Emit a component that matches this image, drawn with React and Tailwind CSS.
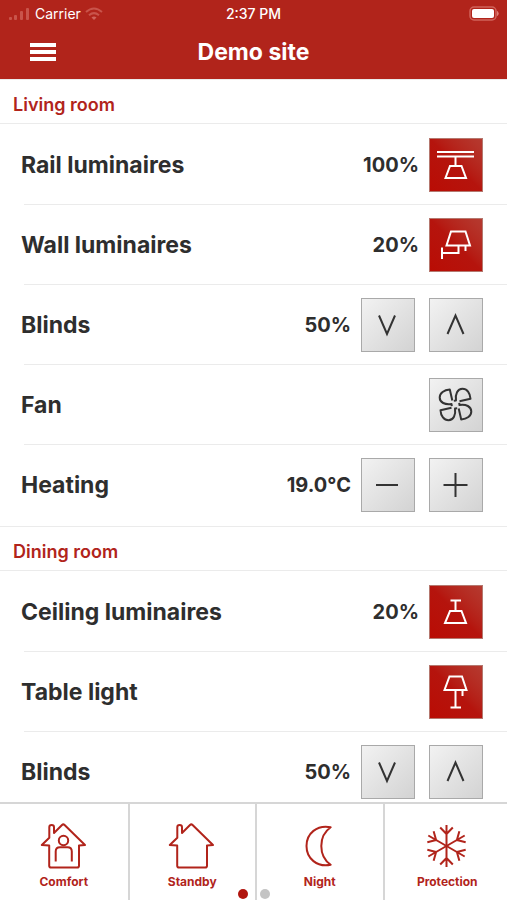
import React, { useState } from 'react';

const RailIcon = () => (
    <>
        <path d="M8 14H45M8 18.5H45M26.5 18.5V28" />
        <path d="M21 28H32.5L37 40H16.5Z" />
    </>
);

const WallIcon = () => (
    <>
        <path d="M22 13.5H36.5L41 27.5H17.5Z" />
        <path d="M29.5 27.5V35H13M13 29.5V41M36.5 27.5V33" />
    </>
);

const CeilingIcon = () => (
    <>
        <path d="M21.5 15.5H32M26.5 15.5V26" />
        <path d="M21 26H32.5L37 38H16Z" />
    </>
);

const TableIcon = () => (
    <>
        <path d="M20.5 11.5H33L37.5 25H15.5Z" />
        <path d="M26.5 25V42.5M21.5 42.5H32M33.5 25V31" />
    </>
);

const fanBlade = 'M24.8 22.8L27 22.5C26 16 28.5 10.7 33.5 10.7C38 10.7 41.2 15 41.5 20.8L30.5 23.3';

const FanIcon = () => (
    <g strokeLinejoin="round">
        <path d={fanBlade} />
        <path d={fanBlade} transform="rotate(90 26.5 26.5)" />
        <path d={fanBlade} transform="rotate(180 26.5 26.5)" />
        <path d={fanBlade} transform="rotate(270 26.5 26.5)" />
    </g>
);

const DownIcon = () => <path d="M18 17.5L26 36L34 17.5" />;
const UpIcon = () => <path d="M18.5 36L26.5 17.5L34.5 36" />;
const MinusIcon = () => <path d="M15 27H37" />;
const PlusIcon = () => <path d="M14.5 27H38.5M26.5 15V39" />;

const HousePath = () => (
    <path d="M9.3 15.7V5.2Q9.3 3 11.6 3Q14 3 14 5.2V11L22 3Q23.3 1.8 24.6 3L45 23L39 23.6V43.7Q39 45.5 37.2 45.5H11Q9.2 45.5 9.2 43.7V23.6L1.8 23Z" />
);

const ComfortIcon = () => (
    <>
        <HousePath />
        <circle cx="23.5" cy="18.5" r="4.7" />
        <path d="M15.7 39.5V29.5Q15.7 25.2 20 25.2H27.5Q31.8 25.2 31.8 29.5V39.5" />
    </>
);

const NightIcon = () => (
    <path d="M34.7 5.2C21 2.5 10.5 11.5 10.5 24C10.5 36.5 21 45.5 34.7 42.8C28.5 38.5 25.3 32 25.3 24C25.3 16 28.5 9.5 34.7 5.2Z" />
);

const ProtectionIcon = () => (
    <>
        {[0, 60, 120, 180, 240, 300].map((angle) => (
            <path key={angle} d="M23.5 24V3M17.2 5.5L23.5 12L29.8 5.5" transform={`rotate(${angle} 23.5 24)`} />
        ))}
    </>
);

const rooms = [
    {
        name: 'Living room',
        devices: [
            { name: 'Rail luminaires', value: '100%', buttons: [{ label: 'Toggle', icon: RailIcon, on: true }] },
            { name: 'Wall luminaires', value: '20%', buttons: [{ label: 'Toggle', icon: WallIcon, on: true }] },
            { name: 'Blinds', value: '50%', buttons: [{ label: 'Down', icon: DownIcon }, { label: 'Up', icon: UpIcon }] },
            { name: 'Fan', buttons: [{ label: 'Toggle', icon: FanIcon }] },
            { name: 'Heating', value: '19.0°C', buttons: [{ label: 'Decrease', icon: MinusIcon }, { label: 'Increase', icon: PlusIcon }] }
        ]
    },
    {
        name: 'Dining room',
        devices: [
            { name: 'Ceiling luminaires', value: '20%', buttons: [{ label: 'Toggle', icon: CeilingIcon, on: true }] },
            { name: 'Table light', buttons: [{ label: 'Toggle', icon: TableIcon, on: true }] },
            { name: 'Blinds', value: '50%', buttons: [{ label: 'Down', icon: DownIcon }, { label: 'Up', icon: UpIcon }] }
        ]
    }
];

const modes = [
    { name: 'Comfort', icon: ComfortIcon },
    { name: 'Standby', icon: HousePath },
    { name: 'Night', icon: NightIcon },
    { name: 'Protection', icon: ProtectionIcon }
];

const StatusBar = () => (
    <div className="grid grid-cols-3 items-center h-7 px-2 text-sm">
        <div className="flex items-center gap-[3px]">
            <svg className="w-6 h-4" viewBox="0 0 24 16" fill="#c9544b">
                <rect x="1" y="11" width="3" height="3" rx="1" />
                <rect x="6" y="9" width="3" height="5" rx="1" />
                <rect x="12" y="5" width="3" height="9" rx="1" />
                <rect x="18" y="2" width="3" height="12" rx="1" />
            </svg>
            <span>Carrier</span>
            <svg className="w-5 h-4" viewBox="0 0 20 16" fill="none" stroke="#c9544b" strokeWidth="2">
                <path d="M2 6Q10 -1 18 6M5 9.3Q10 5 15 9.3" />
                <path d="M7.5 11.5Q10 9.5 12.5 11.5L10 14Z" fill="#d0635b" stroke="none" />
            </svg>
        </div>
        <span className="text-center font-medium">2:37 PM</span>
        <svg className="w-8 h-4 justify-self-end" viewBox="0 0 32 16" fill="none">
            <rect x="3" y="1" width="26" height="13" rx="4" stroke="#d0635b" strokeWidth="1.5" />
            <rect x="5" y="3" width="22" height="9" rx="2" fill="#fff" />
            <path d="M30.5 5.5Q32 7.5 30.5 9.5Z" fill="#dd7d75" stroke="#dd7d75" />
        </svg>
    </div>
);

const DeviceButton = ({ device, label, icon: Icon, on }) => (
    <button
        type="button"
        aria-label={`${device} ${label}`}
        className={
            on
                ? 'w-[54px] h-[54px] border border-[#b5786f] bg-linear-to-tr from-[#b90c04] via-[#b5140d] to-[#b53a30] text-white'
                : 'w-[54px] h-[54px] border border-[#a9a9a9] bg-linear-to-tl from-[#d3d3d3] to-[#f2f2f2] text-[#333]'
        }
    >
        <svg className="w-full h-full" viewBox="1 1 52 52" fill="none" stroke="currentColor" strokeWidth="2">
            <Icon />
        </svg>
    </button>
);

const Device = ({ name, value, buttons }) => (
    <li className="relative flex items-center h-20 pl-[21px] pr-6 not-last:after:absolute not-last:after:bottom-0 not-last:after:left-6 not-last:after:right-0 not-last:after:h-px not-last:after:bg-[#ebebeb]">
        <span className="flex-1 text-[23px] font-bold">{name}</span>
        {value && <span className="mr-2.5 text-xl font-bold">{value}</span>}
        <div className="flex gap-3.5">
            {buttons.map((button) => (
                <DeviceButton key={button.label} device={name} {...button} />
            ))}
        </div>
    </li>
);

const App = () => {
    const [page, setPage] = useState(0);

    return (
        <div className="flex flex-col h-screen bg-white text-[#2e2e2e] font-['Inter',sans-serif]">
            <header className="h-[79px] shrink-0 bg-[#b1241b] text-white">
                <StatusBar />
                <div className="grid grid-cols-[1fr_auto_1fr] items-center h-12 px-[30px]">
                    <button type="button" aria-label="Menu" className="flex flex-col gap-[3px] w-[26px]">
                        <span className="w-full h-1 bg-white" />
                        <span className="w-full h-1 bg-white" />
                        <span className="w-full h-1 bg-white" />
                    </button>
                    <h1 className="text-[23px] font-bold">Demo site</h1>
                </div>
            </header>

            <main className="flex-1 min-h-0 overflow-y-auto [scrollbar-width:none]">
                {rooms.map((room) => (
                    <section key={room.name}>
                        <h2 className="flex items-center h-[45px] pt-1.5 pl-[13px] border-y border-[#ebebeb] text-lg font-semibold text-[#b1241b]">
                            {room.name}
                        </h2>
                        <ul className="py-px">
                            {room.devices.map((device) => (
                                <Device key={device.name} {...device} />
                            ))}
                        </ul>
                    </section>
                ))}
            </main>

            <footer className="relative shrink-0 overflow-hidden border-t-2 border-[#d6d6d6] bg-white">
                <nav className="grid grid-cols-4 h-24 -mr-[3px]">
                    {modes.map(({ name, icon: Icon }) => (
                        <button key={name} type="button" className="flex flex-col items-center pt-[18px] gap-1 border-[#d6d6d6] not-first:border-l-2 text-[#b1241b]">
                            <svg className="w-12 h-12" viewBox="0 0 48 48" fill="none" stroke="currentColor" strokeWidth="2" strokeLinejoin="round">
                                <Icon />
                            </svg>
                            <span className="text-xs font-bold">{name}</span>
                        </button>
                    ))}
                </nav>
                <div className="absolute bottom-px inset-x-0 flex justify-center gap-3">
                    {[0, 1].map((index) => (
                        <button
                            key={index}
                            type="button"
                            aria-label={`Page ${index + 1}`}
                            onClick={() => setPage(index)}
                            className={page === index ? 'size-2.5 rounded-full bg-[#b1150e]' : 'size-2.5 rounded-full bg-[#c4c4c4]'}
                        />
                    ))}
                </div>
            </footer>
        </div>
    );
};

export default App;
